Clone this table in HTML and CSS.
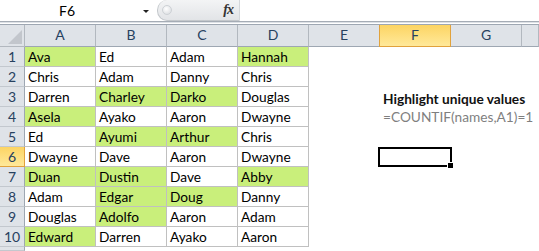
FILE: index.html
```html
<!DOCTYPE html>
<html lang="en">
<head>
    <meta charset="UTF-8">
    <title>Highlight unique values</title>
    <link rel="stylesheet" href="styles.css">
</head>
<body>
    <div class="formula-bar">
        <div class="name-box">
            <span class="cell-ref">F6</span>
            <span class="drop-arrow"></span>
        </div>
        <div class="fx-box">
            <span class="fx-dot"></span>
            <span class="fx">fx</span>
        </div>
        <div class="formula-input"></div>
    </div>

    <div class="sheet" id="sheet"></div>

    <script>
        // Names list in A1:D10, a leading * marks a highlighted (unique) name
        const names = [
            ['*Ava', 'Ed', 'Adam', '*Hannah'],
            ['Chris', 'Adam', 'Danny', 'Chris'],
            ['Darren', '*Charley', '*Darko', 'Douglas'],
            ['*Asela', 'Ayako', 'Aaron', 'Dwayne'],
            ['Ed', '*Ayumi', '*Arthur', 'Chris'],
            ['Dwayne', 'Dave', 'Aaron', 'Dwayne'],
            ['*Duan', '*Dustin', 'Dave', '*Abby'],
            ['Adam', '*Edgar', '*Doug', 'Danny'],
            ['Douglas', '*Adolfo', 'Aaron', 'Adam'],
            ['*Edward', 'Darren', 'Ayako', 'Aaron']
        ];
        const cols = ['A', 'B', 'C', 'D', 'E', 'F', 'G', ''];
        const sheet = document.getElementById('sheet');

        function addCell(cls, text) {
            const div = document.createElement('div');
            div.className = cls;
            if (text) div.textContent = text;
            sheet.appendChild(div);
            return div;
        }

        // Header row
        addCell('corner');
        cols.forEach(function (c) {
            addCell(c === 'F' ? 'col-head active' : 'col-head', c);
        });

        // Data rows (plus a partial row 11 at the bottom)
        for (let r = 0; r < 11; r++) {
            addCell(r === 5 ? 'row-head active' : 'row-head', r < 10 ? String(r + 1) : '');
            for (let c = 0; c < 8; c++) {
                let cls = 'cell';
                let text = '';
                if (r < 10 && c < 4) {
                    cls += ' boxed';
                    text = names[r][c];
                    if (text.charAt(0) === '*') {
                        cls += ' unique';
                        text = text.slice(1);
                    }
                }
                if (c === 5 && r === 2) {
                    cls += ' note-title';
                    text = 'Highlight unique values';
                }
                if (c === 5 && r === 3) {
                    cls += ' note-formula';
                    text = '=COUNTIF(names,A1)=1';
                }
                if (c === 5 && r === 5) cls += ' selected';
                addCell(cls, text);
            }
        }
    </script>
</body>
</html>
```

FILE: styles.css
```css
html {
    overflow: hidden;
}
body {
    margin: 0;
    width: 539px;
    height: 251px;
    overflow: hidden;
    background: #fff;
    font-family: Lato, 'Open Sans', sans-serif;
    font-size: 13.7px;
    color: #000;
}

/* Formula bar */
.formula-bar {
    display: flex;
    height: 21px;
    border-bottom: 1px solid #a5acb5;
    box-shadow: 0 1px 0 #dde1e6;
    background: #fff;
}
.name-box {
    width: 157px;
    position: relative;
    display: flex;
    align-items: center;
}
.cell-ref {
    width: 134px;
    text-align: center;
    font-size: 14px;
    color: #000;
}
.drop-arrow {
    position: absolute;
    left: 143px;
    top: 10px;
    border-left: 3px solid transparent;
    border-right: 3px solid transparent;
    border-top: 3px solid #222;
}
.fx-box {
    width: 83px;
    box-sizing: border-box;
    border: 1px solid #c4c8cc;
    border-top: none;
    border-right: 1px solid #d4d7db;
    border-radius: 10px 0 0 10px;
    background: linear-gradient(#f3f4f5, #e2e4e7);
    display: flex;
    align-items: center;
    justify-content: space-between;
    padding: 0 6px 0 4px;
}
.fx-dot {
    width: 8px;
    height: 8px;
    border-radius: 50%;
    background: radial-gradient(circle at 40% 35%, #ffffff, #d5d8dc);
    border: 1px solid #cdd1d5;
}
.fx {
    font-family: 'Liberation Serif', serif;
    font-style: italic;
    font-weight: bold;
    font-size: 14px;
    color: #333;
    letter-spacing: -1px;
}
.formula-input {
    flex: 1;
}

/* Worksheet grid */
.sheet {
    margin-top: 2px;
    height: 227px;
    box-sizing: border-box;
    display: grid;
    grid-template-columns: 25px repeat(7, 71px) 17px;
    grid-template-rows: 22px repeat(10, 20px) 4px;
    border-top: 1px solid #9ea7b2;
}
.sheet > div {
    box-sizing: border-box;
    white-space: nowrap;
    line-height: 19px;
}

.corner,
.col-head,
.row-head {
    background: #dfe3e8;
    color: #27415f;
    border-right: 1px solid #b2b8bf;
    border-bottom: 1px solid #b2b8bf;
}
.corner {
    position: relative;
}
.corner::after {
    content: '';
    position: absolute;
    right: 2px;
    bottom: 2px;
    border-left: 14px solid transparent;
    border-bottom: 14px solid #c2c6cc;
}
.col-head {
    text-align: center;
    line-height: 21px;
    font-size: 14px;
    border-bottom-color: #9ea7b2;
}
.row-head {
    text-align: center;
    font-size: 14px;
    border-right-color: #9ea7b2;
    border-bottom-color: #c3c8ce;
}
.col-head.active,
.row-head.active {
    background: linear-gradient(#fcd463, #ffe99a);
    border-right-color: #e1a23c;
    border-bottom-color: #e1a23c;
    color: #27415f;
}
.col-head.active {
    border-left: 1px solid #e1a23c;
    margin-left: -1px;
}

.cell {
    padding-left: 3px;
    overflow: visible;
}
.cell.boxed {
    border-right: 1px solid #c0c0c0;
    border-bottom: 1px solid #c0c0c0;
}
.cell.unique {
    background: #c9ef7b;
}

/* Note beside the table */
.note-title {
    font-weight: bold;
    color: #111;
    padding-top: 2px;
}
.note-formula {
    color: #7f7f7f;
}

/* Active cell with fill handle */
.cell.selected {
    position: relative;
    border: 2px solid #000;
    margin: 0 -1px 0 -2px;
}
.cell.selected::after {
    content: '';
    position: absolute;
    right: -4px;
    bottom: -4px;
    width: 5px;
    height: 5px;
    background: #000;
    border: 1px solid #fff;
}
```
